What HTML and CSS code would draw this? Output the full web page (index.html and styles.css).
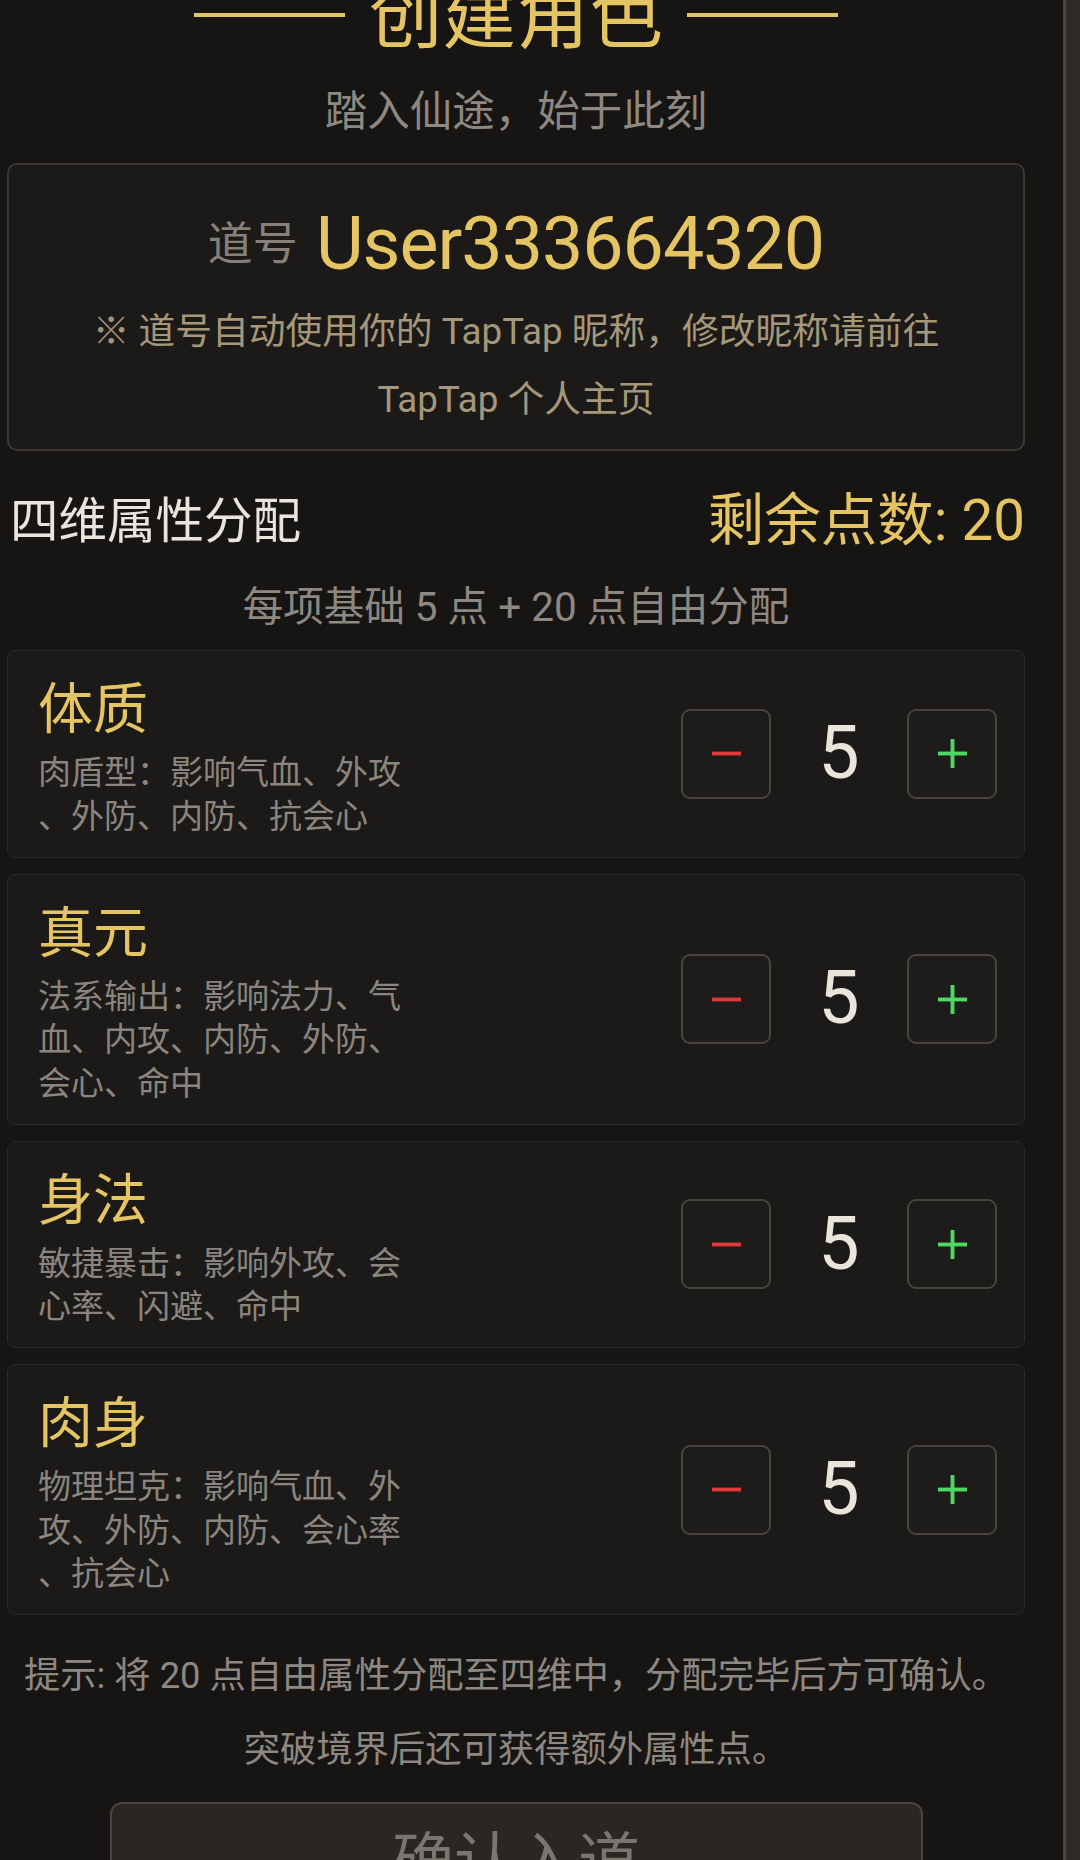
FILE: index.html
```html
<!DOCTYPE html>
<html lang="zh-CN">
<head>
<meta charset="utf-8">
<title>创建角色</title>
<link rel="stylesheet" href="styles.css">
</head>
<body>
<div class="screen">
  <main class="main">
    <header class="title-row">
      <span class="rule"></span>
      <h1 class="title">创建角色</h1>
      <span class="rule"></span>
    </header>
    <p class="subtitle">踏入仙途，始于此刻</p>

    <section class="name-card">
      <div class="name-row">
        <span class="name-label">道号</span>
        <span class="name-value">User333664320</span>
      </div>
      <p class="name-note">※ 道号自动使用你的 TapTap 昵称，修改昵称请前往<br>TapTap 个人主页</p>
    </section>

    <div class="section-head">
      <h2 class="section-title">四维属性分配</h2>
      <span class="remain">剩余点数: 20</span>
    </div>
    <p class="section-hint">每项基础 5 点 + 20 点自由分配</p>

    <div class="attr-list">
      <div class="attr-card">
        <div class="attr-info">
          <div class="attr-name">体质</div>
          <p class="attr-desc">肉盾型：影响气血、外攻<br>、外防、内防、抗会心</p>
        </div>
        <div class="stepper">
          <button class="step-btn"><svg class="step-icon" viewBox="0 0 30 30"><rect x="0" y="13" width="30" height="4" fill="#e0393b"/></svg></button>
          <span class="step-val">5</span>
          <button class="step-btn"><svg class="step-icon" viewBox="0 0 30 30"><rect x="0" y="13" width="30" height="4" fill="#4fd764"/><rect x="13" y="0" width="4" height="30" fill="#4fd764"/></svg></button>
        </div>
      </div>

      <div class="attr-card">
        <div class="attr-info">
          <div class="attr-name">真元</div>
          <p class="attr-desc">法系输出：影响法力、气<br>血、内攻、内防、外防、<br>会心、命中</p>
        </div>
        <div class="stepper">
          <button class="step-btn"><svg class="step-icon" viewBox="0 0 30 30"><rect x="0" y="13" width="30" height="4" fill="#e0393b"/></svg></button>
          <span class="step-val">5</span>
          <button class="step-btn"><svg class="step-icon" viewBox="0 0 30 30"><rect x="0" y="13" width="30" height="4" fill="#4fd764"/><rect x="13" y="0" width="4" height="30" fill="#4fd764"/></svg></button>
        </div>
      </div>

      <div class="attr-card">
        <div class="attr-info">
          <div class="attr-name">身法</div>
          <p class="attr-desc">敏捷暴击：影响外攻、会<br>心率、闪避、命中</p>
        </div>
        <div class="stepper">
          <button class="step-btn"><svg class="step-icon" viewBox="0 0 30 30"><rect x="0" y="13" width="30" height="4" fill="#e0393b"/></svg></button>
          <span class="step-val">5</span>
          <button class="step-btn"><svg class="step-icon" viewBox="0 0 30 30"><rect x="0" y="13" width="30" height="4" fill="#4fd764"/><rect x="13" y="0" width="4" height="30" fill="#4fd764"/></svg></button>
        </div>
      </div>

      <div class="attr-card">
        <div class="attr-info">
          <div class="attr-name">肉身</div>
          <p class="attr-desc">物理坦克：影响气血、外<br>攻、外防、内防、会心率<br>、抗会心</p>
        </div>
        <div class="stepper">
          <button class="step-btn"><svg class="step-icon" viewBox="0 0 30 30"><rect x="0" y="13" width="30" height="4" fill="#e0393b"/></svg></button>
          <span class="step-val">5</span>
          <button class="step-btn"><svg class="step-icon" viewBox="0 0 30 30"><rect x="0" y="13" width="30" height="4" fill="#4fd764"/><rect x="13" y="0" width="4" height="30" fill="#4fd764"/></svg></button>
        </div>
      </div>
    </div>

    <p class="tips">提示: 将 20 点自由属性分配至四维中，分配完毕后方可确认。<br>突破境界后还可获得额外属性点。</p>

    <button class="confirm">确认入道</button>
  </main>
  <aside class="edge"></aside>
</div>
</body>
</html>
```

FILE: styles.css
```css
html, body {
  margin: 0;
  padding: 0;
  background: #171513;
}

body {
  width: 1080px;
  height: 1860px;
  overflow: hidden;
  font-family: Roboto, "Noto Sans CJK SC", sans-serif;
}

.screen {
  display: flex;
  height: 1860px;
  overflow: hidden;
  background: #171513;
}

.main {
  flex: 1;
  padding: 0 38px 0 7px;
  min-width: 0;
}

.edge {
  width: 14px;
  border-left: 3px solid #4a453e;
  background: #2d2924;
}

/* Title */
.title-row {
  height: 88px;
  margin-top: -27px;
  display: flex;
  justify-content: center;
  align-items: center;
  gap: 24px;
}

.rule {
  width: 151px;
  height: 4px;
  background: #e5c463;
  margin-bottom: 5px;
}

.title {
  margin: 0;
  font-size: 73.5px;
  line-height: 88px;
  font-weight: 400;
  color: #e5c463;
}

.subtitle {
  margin: 19px 0 0;
  font-size: 42.5px;
  line-height: 63px;
  text-align: center;
  color: #8d8881;
}

/* Name card */
.name-card {
  margin-top: 20px;
  border: 2px solid #3b3732;
  border-radius: 10px;
  background: #1c1a18;
  padding: 35px 20px 15px;
}

.name-row {
  height: 88px;
  display: flex;
  justify-content: center;
  align-items: center;
  gap: 18px;
}

.name-label {
  font-size: 45px;
  line-height: 1;
  color: #85807a;
}

.name-value {
  font-size: 73.5px;
  line-height: 88px;
  letter-spacing: -1px;
  color: #e5c463;
}

.name-note {
  margin: 10px 0 0;
  font-size: 36.75px;
  line-height: 68px;
  text-align: center;
  color: #a5977a;
}

/* Section head */
.section-head {
  margin-top: 35px;
  padding-left: 3px;
  display: flex;
  justify-content: space-between;
  align-items: center;
  line-height: 71px;
}

.section-title {
  margin: 0;
  font-size: 48.5px;
  font-weight: 400;
  color: #e9e5dd;
}

.remain {
  font-size: 56.5px;
  color: #e5c463;
}

.section-hint {
  margin: 23px 0 0;
  font-size: 40.5px;
  line-height: 55px;
  text-align: center;
  color: #8d8881;
}

/* Attribute cards */
.attr-list {
  margin-top: 15px;
  display: flex;
  flex-direction: column;
  gap: 16px;
}

.attr-card {
  display: flex;
  justify-content: space-between;
  align-items: center;
  border: 1px solid #2b2825;
  border-radius: 8px;
  background: #1c1a18;
  padding: 24px 27px 18.5px 30px;
}

.attr-name {
  font-size: 55px;
  line-height: 68px;
  color: #e5c463;
}

.attr-desc {
  margin: 8px 0 0;
  font-size: 33px;
  line-height: 43.5px;
  color: #8a857e;
}

.stepper {
  display: flex;
  align-items: center;
  gap: 30px;
  margin-bottom: 5.5px;
}

.step-btn {
  width: 90px;
  height: 90px;
  box-sizing: border-box;
  border: 2px solid #47433d;
  border-radius: 9px;
  background: #1e1c1a;
  padding: 0;
  display: flex;
  justify-content: center;
  align-items: center;
}

.step-icon {
  width: 29px;
  height: 29px;
  display: block;
}

.step-val {
  width: 76px;
  text-align: center;
  font-size: 73.5px;
  line-height: 1;
  color: #e9e5dd;
}

/* Tips & confirm */
.tips {
  margin: 24px 0 0;
  font-size: 36.3px;
  line-height: 73.5px;
  text-align: center;
  color: #8d8881;
}

.confirm {
  display: block;
  width: 813px;
  margin: 16px auto 0;
  border: 2px solid #4a443b;
  border-radius: 12px;
  background: #2a2622;
  padding: 12px 0 20px;
  font-family: Roboto, "Noto Sans CJK SC", sans-serif;
  font-size: 62px;
  line-height: 93px;
  color: #7a756e;
}
```
